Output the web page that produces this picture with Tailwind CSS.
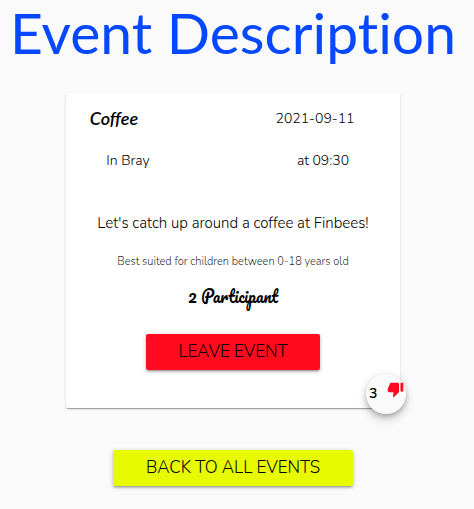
<!DOCTYPE html>
<html lang="en">
<head>
<meta charset="utf-8">
<meta name="viewport" content="width=device-width, initial-scale=1">
<title>Event Description</title>
<script src="https://cdn.jsdelivr.net/npm/@tailwindcss/browser@4"></script>
</head>
<body class="min-h-screen bg-[#fafafa] font-['Nunito','Open_Sans',sans-serif] text-black/87">
<main class="flex flex-col items-center pr-2 pb-5">
  <h1 class="text-center font-['Lato',sans-serif] text-[57px] leading-[64px] whitespace-nowrap text-[#0548ff] [font-variant-ligatures:none]">Event Description</h1>
  <article class="relative mt-[29px] flex w-full max-w-[334px] flex-col items-center rounded-xs bg-white pt-3 pb-[38px] shadow-[0_2px_1px_-1px_rgba(0,0,0,0.2),0_1px_1px_0_rgba(0,0,0,0.14),0_1px_3px_0_rgba(0,0,0,0.12)]">
    <div class="grid w-full grid-cols-[96px_1fr] gap-y-[14px] text-center text-sm leading-7">
      <h2 class="font-['Lato',sans-serif] text-lg leading-[26px] font-semibold text-black italic">Coffee</h2>
      <p class="pl-[68px] font-light text-black">2021-09-11</p>
      <p class="pl-7 font-light whitespace-nowrap text-black">In Bray</p>
      <p class="pl-[84px] font-light text-black">at 09:30</p>
    </div>
    <p class="mt-[34px] text-[15px] leading-7 font-light text-black">Let's catch up around a coffee at Finbees!</p>
    <p class="mt-[14px] text-[11px] leading-[22px] font-light">Best suited for children between 0-18 years old</p>
    <p class="mt-[11px] font-['Pacifico','Lato',cursive] text-base leading-6 text-black">2 Participant</p>
    <button type="button" class="mt-[26px] h-9 w-[174px] rounded-xs bg-[#ff0a1e] text-[17px] font-light text-black shadow-[0_2px_2px_0_rgba(0,0,0,0.14),0_3px_1px_-2px_rgba(0,0,0,0.12),0_1px_5px_0_rgba(0,0,0,0.2)]">LEAVE EVENT</button>
    <button type="button" aria-label="3 dislikes" class="absolute -right-[6px] -bottom-[6px] flex size-10 items-center justify-between rounded-full bg-[#fafafa] pr-[2px] pl-[3px] text-sm font-semibold text-black shadow-[0_3px_5px_-1px_rgba(0,0,0,0.2),0_6px_10px_0_rgba(0,0,0,0.14),0_1px_8px_0_rgba(0,0,0,0.12)]">
      <span>3</span>
      <svg class="mb-2 h-4 w-[17px]" viewBox="0 2 24 22" preserveAspectRatio="none" fill="#ff0a1e" aria-hidden="true"><path d="M15 3H6c-.83 0-1.54.5-1.84 1.22l-3.02 7.05c-.09.23-.14.47-.14.73v2c0 1.1.9 2 2 2h6.31l-.95 4.57-.03.32c0 .41.17.79.44 1.06L9.83 23l6.59-6.59c.36-.36.58-.86.58-1.41V5c0-1.1-.9-2-2-2zm4 0v12h4V3h-4z"/></svg>
    </button>
  </article>
  <a href="#events" class="mt-[42px] flex h-9 w-60 items-center justify-center rounded-xs bg-[#e8fa00] text-[17px] font-light text-black shadow-[0_2px_2px_0_rgba(0,0,0,0.14),0_3px_1px_-2px_rgba(0,0,0,0.12),0_1px_5px_0_rgba(0,0,0,0.2)]">BACK TO ALL EVENTS</a>
</main>
</body>
</html>
